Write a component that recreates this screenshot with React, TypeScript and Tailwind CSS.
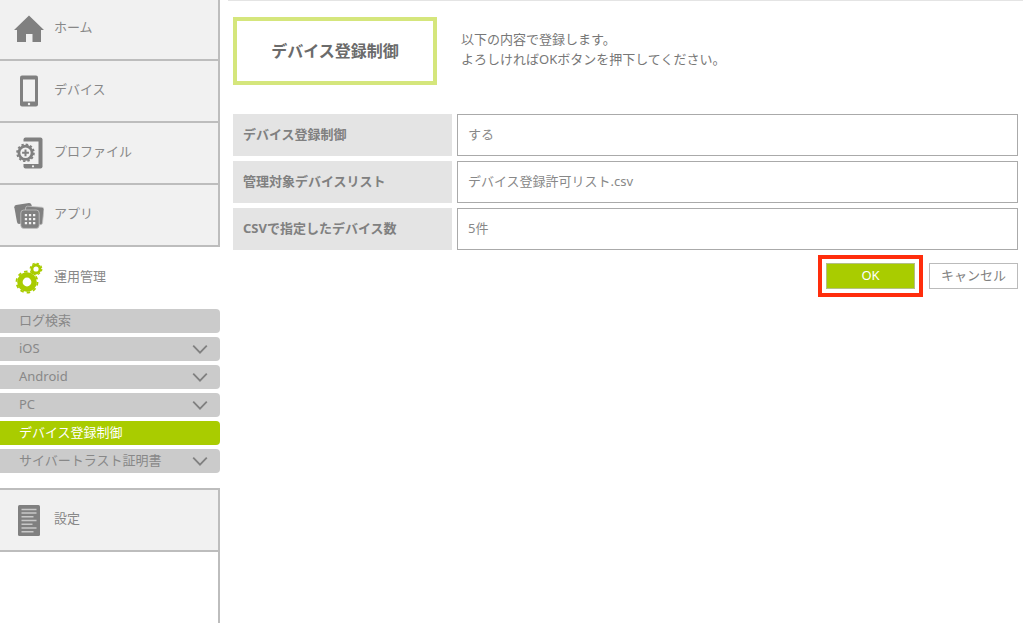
import type { ReactNode } from "react";

const HomeIcon = () => (
  <svg width="30" height="28" viewBox="0 0 30 28" fill="#808080">
    <path d="M15 0.5 L30 15 H27 V27 H18.5 V19 H12 V27 H3 V15 H0 Z" />
  </svg>
);

const DeviceIcon = () => (
  <svg width="18" height="32" viewBox="0 0 18 32">
    <rect width="18" height="31" y="0.5" rx="2" fill="#808080" />
    <rect x="3" y="4.5" width="12" height="22" fill="#f1f1f1" />
    <circle cx="9" cy="29" r="1.2" fill="#f1f1f1" />
  </svg>
);

const ProfileIcon = () => (
  <svg width="28" height="32" viewBox="0 0 28 32">
    <rect x="8.5" y="0.5" width="19" height="31" rx="2" fill="#808080" />
    <rect x="8" y="4.5" width="15.5" height="22.5" fill="#f1f1f1" />
    <circle cx="18" cy="29.3" r="1.1" fill="#f1f1f1" />
    <circle cx="10.5" cy="15.8" r="10" fill="#f1f1f1" />
    <circle cx="10.5" cy="15.8" r="8.4" fill="none" stroke="#808080" strokeWidth="1.8" strokeDasharray="2.4 1.998" />
    <circle cx="10.5" cy="15.8" r="6.6" fill="none" stroke="#808080" strokeWidth="2.8" />
    <path d="M10.5 12.4 V19.2 M7.1 15.8 H13.9" stroke="#808080" strokeWidth="2" />
  </svg>
);

const AppIcon = () => (
  <svg width="30" height="27" viewBox="0 0 30 27">
    <path
      d="M2 3 L15 1.1 Q17 1 17.6 3 L19 19 L5 22 Q3.4 22 3 20 L0.3 5.2 Q0.2 3.4 2 3 Z"
      fill="#808080"
    />
    <path
      d="M13.5 4.2 L28 5.2 Q30 5.4 29.9 7.5 L28.5 21 Q28.3 22.8 26.5 22.7 L11 21 L11.6 6 Q11.8 4.2 13.5 4.2 Z"
      fill="#808080"
      stroke="#c4c4c4"
      strokeWidth="0.8"
    />
    <rect x="6.8" y="8" width="18.4" height="18.4" rx="3" fill="#808080" stroke="#c4c4c4" strokeWidth="0.8" />
    <g fill="#f1f1f1">
      <path d="M10.8 12h2.3v2.3h-2.3z M14.9 12h2.3v2.3h-2.3z M19 12h2.3v2.3h-2.3z" />
      <path d="M10.8 16h2.3v2.3h-2.3z M14.9 16h2.3v2.3h-2.3z M19 16h2.3v2.3h-2.3z" />
      <path d="M10.8 20h2.3v2.3h-2.3z M14.9 20h2.3v2.3h-2.3z M19 20h2.3v2.3h-2.3z" />
    </g>
  </svg>
);

const GearsIcon = () => (
  <svg width="28" height="32" viewBox="0 0 28 32" fill="none" stroke="#a9cc00">
    <circle cx="12" cy="20" r="7.1" strokeWidth="5.4" />
    <circle cx="12" cy="20" r="10.5" strokeWidth="1.8" strokeDasharray="3.5 3.097" />
    <circle cx="21" cy="7" r="4" strokeWidth="2.8" />
    <circle cx="21" cy="7" r="5.8" strokeWidth="1.2" strokeDasharray="2.4 2.155" />
  </svg>
);

const SettingsIcon = () => (
  <svg width="22" height="31" viewBox="0 0 22 31">
    <rect width="22" height="31" rx="1.5" fill="#808080" />
    <path
      d="M3.5 4.5h15 M3.5 8h15 M3.5 11.7h12 M3.5 15.5h15 M3.5 19.3h11 M3.5 23h15 M3.5 26.7h12"
      stroke="#c8c8c8"
      strokeWidth="1.6"
    />
  </svg>
);

const Chevron = () => (
  <svg width="16" height="10" viewBox="0 0 16 10" fill="none" stroke="#808080" strokeWidth="1.8">
    <path d="M1.2 1.6 L8 8.6 L14.8 1.6" />
  </svg>
);

const subMenu = [
  { label: "ログ検索", expandable: false },
  { label: "iOS", expandable: true },
  { label: "Android", expandable: true },
  { label: "PC", expandable: true },
  { label: "デバイス登録制御", expandable: false, active: true },
  { label: "サイバートラスト証明書", expandable: true },
];

const rows = [
  { label: "デバイス登録制御", value: "する" },
  { label: "管理対象デバイスリスト", value: "デバイス登録許可リスト.csv" },
  { label: "CSVで指定したデバイス数", value: "5件" },
];

function MenuItem({ icon, label }: { icon: ReactNode; label: string }) {
  return (
    <a
      href="#"
      className="flex h-[62px] items-center border-r-2 border-b-2 border-[#bdbdbd] bg-[#f1f1f1] pl-3.5"
    >
      <span className="flex w-[30px] justify-center">{icon}</span>
      <span className="pb-1 pl-2.5">{label}</span>
    </a>
  );
}

export default function App() {
  return (
    <div className="flex min-h-screen bg-white font-['Noto_Sans','Noto_Sans_CJK_JP',sans-serif] text-[13px] leading-5 text-[#888]">
      <nav className="flex w-[220px] shrink-0 flex-col">
        <div className="-mt-px">
          <MenuItem icon={<HomeIcon />} label="ホーム" />
          <MenuItem icon={<DeviceIcon />} label="デバイス" />
          <MenuItem icon={<ProfileIcon />} label="プロファイル" />
          <MenuItem icon={<AppIcon />} label="アプリ" />
        </div>

        <a href="#" className="flex h-[62px] items-center pl-3.5">
          <span className="flex w-[30px] justify-center">
            <GearsIcon />
          </span>
          <span className="pb-1 pl-2.5">運用管理</span>
        </a>
        <ul className="flex flex-col gap-1 pb-[15px]">
          {subMenu.map((item) => (
            <li key={item.label}>
              <a
                href="#"
                className={`flex h-6 items-center justify-between rounded-r pr-3 pl-[19px] ${
                  item.active ? "bg-[#a9cc00] text-white" : "bg-[#cbcbcb]"
                }`}
              >
                <span className="pb-0.5">{item.label}</span>
                {item.expandable && <Chevron />}
              </a>
            </li>
          ))}
        </ul>

        <div className="border-t-2 border-[#bdbdbd]">
          <MenuItem icon={<SettingsIcon />} label="設定" />
        </div>
        <div className="flex-1 border-r-2 border-[#bdbdbd]" />
      </nav>

      <main className="min-w-0 flex-1 pr-px pl-2">
        <div className="h-px bg-[#e4e4e4]" />
        <header className="flex pt-4 pl-[5px]">
          <h1 className="flex h-[68px] w-[204px] shrink-0 items-center justify-center border-4 border-[#d5e67c] text-base font-bold text-[#6b6b6b]">
            デバイス登録制御
          </h1>
          <p className="pt-3 pl-6 text-[#777]">
            以下の内容で登録します。
            <br />
            よろしければOKボタンを押下してください。
          </p>
        </header>

        <table className="mt-6 w-full table-fixed border-separate border-spacing-[5px]">
          <tbody>
            {rows.map((row) => (
              <tr key={row.label} className="h-[42px]">
                <th scope="row" className="w-[219px] bg-[#e4e4e4] px-2.5 pb-0.5 text-left font-bold text-[#808080]">
                  {row.label}
                </th>
                <td className="border border-[#aaa] px-2.5 pb-0.5">{row.value}</td>
              </tr>
            ))}
          </tbody>
        </table>

        <div className="flex items-center justify-end gap-1.5 pr-[5px]">
          <div className="border-4 border-[#ff2d0c] p-1">
            <button type="button" className="block h-[26px] w-[89px] border border-[#b4bf86] bg-[#a9cc00] pb-0.5 text-white">
              OK
            </button>
          </div>
          <button type="button" className="h-[26px] w-[89px] border border-[#bbb] bg-white pb-0.5 text-[#808080]">
            キャンセル
          </button>
        </div>
      </main>
    </div>
  );
}
